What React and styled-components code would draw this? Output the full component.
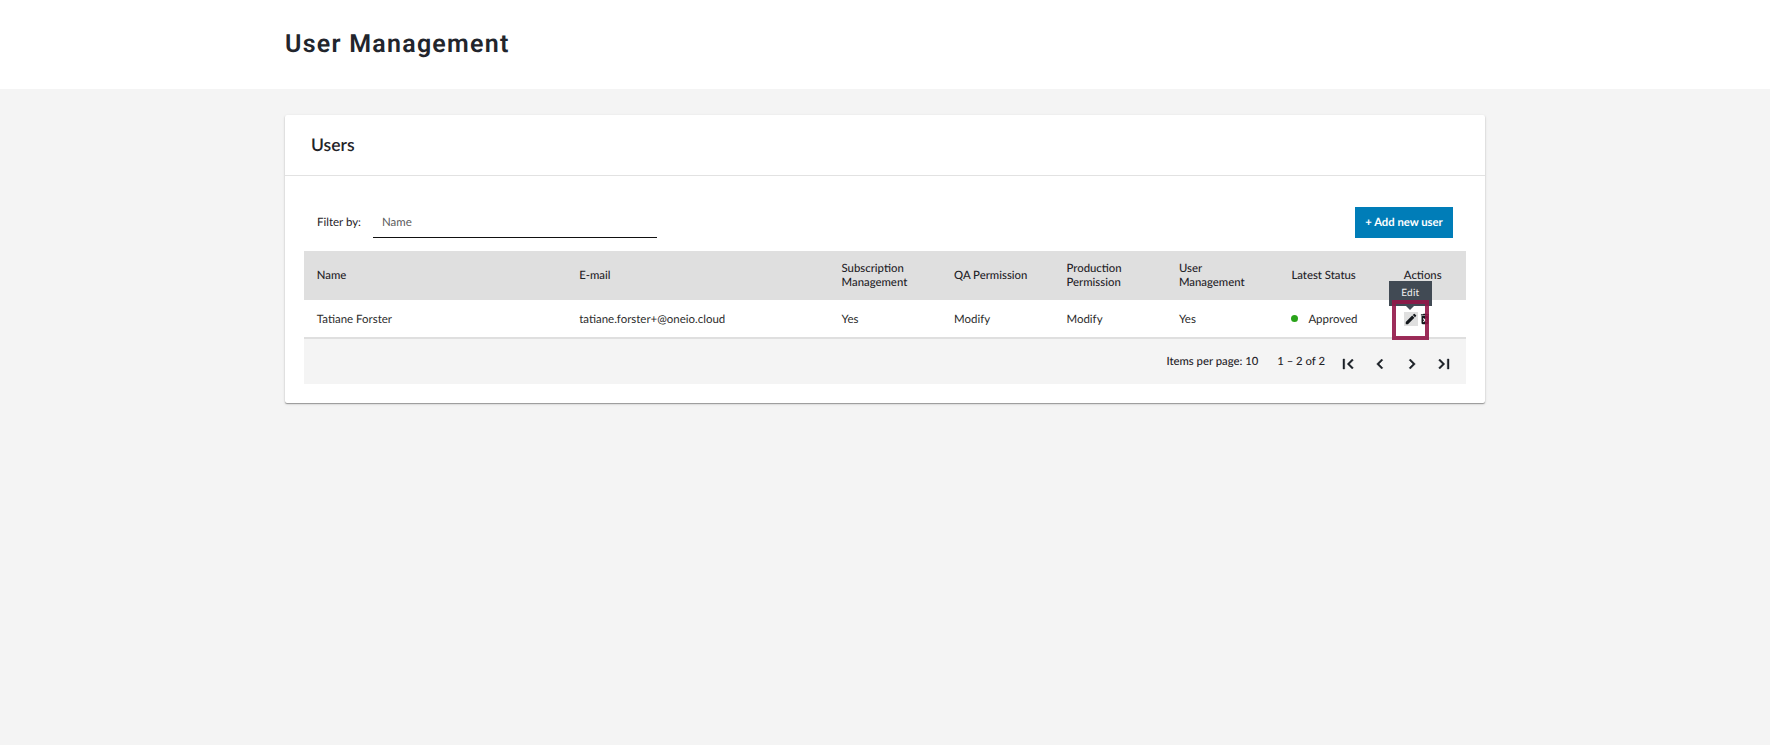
import React from 'react';
import styled, { createGlobalStyle } from 'styled-components';
import {
  MdEdit,
  MdDeleteForever,
  MdFirstPage,
  MdChevronLeft,
  MdChevronRight,
  MdLastPage,
} from 'react-icons/md';

const GlobalStyle = createGlobalStyle`
  * { box-sizing: border-box; }
  body {
    margin: 0;
    background: #f4f4f4;
    color: #1f2328;
    font-family: Lato, "Liberation Sans", sans-serif;
    font-size: 11.47px;
    line-height: 14px;
    text-rendering: geometricPrecision;
  }
  button, input {
    font: inherit;
    color: inherit;
    text-rendering: inherit;
    border: 0;
    padding: 0;
    border-radius: 0;
    background: none;
  }
`;

const Page = styled.div`
  min-height: 745px;
`;

const PageHeader = styled.header`
  height: 89px;
  background: #fff;
`;

const Container = styled.div`
  width: 1200px;
  margin: 0 auto;
`;

const Title = styled.h1`
  margin: 0;
  padding-top: 29px;
  font-family: Roboto, "Liberation Sans", sans-serif;
  font-size: 25px;
  line-height: 32px;
  font-weight: 600;
  letter-spacing: 1.25px;
  color: #22252c;
`;

const Card = styled.section`
  width: 1200px;
  height: 288px;
  margin: 26px auto 0;
  background: #fff;
  border-radius: 2px;
  box-shadow: 0 1px 1px rgba(0, 0, 0, 0.32), 0 1px 3px rgba(0, 0, 0, 0.14);
`;

const CardHeader = styled.div`
  height: 61px;
  padding: 19px 26px 0;
  border-bottom: 1px solid #e2e2e2;
`;

const CardTitle = styled.h2`
  margin: 0;
  font-size: 17.5px;
  line-height: 22px;
  font-weight: 600;
`;

const CardBody = styled.div`
  padding: 31px 19px 0;
`;

const Toolbar = styled.div`
  display: flex;
  height: 44px;
  padding: 0 13px;
`;

const FilterLabel = styled.label`
  width: 56px;
  padding-top: 9px;
`;

const FilterInput = styled.input`
  width: 284px;
  height: 31px;
  padding: 1px 9px 0;
  border-bottom: 1px solid #111;
  outline: none;
  &::placeholder { color: #5c5c5c; opacity: 1; }
`;

const AddButton = styled.button`
  width: 98px;
  height: 31px;
  margin-left: auto;
  padding-top: 1px;
  background: #007db8;
  color: #fff;
  font-size: 11.25px;
  font-weight: 700;
  white-space: nowrap;
`;

const Row = styled.div`
  display: grid;
  grid-template-columns: 7fr 7fr 3fr 3fr 3fr 3fr 3fr 2fr;
  align-items: center;
`;

const HeadRow = styled(Row)`
  height: 49px;
  padding-top: 1px;
  background: #dfdfdf;
  font-size: 11.35px;
  font-weight: 500;
`;

const BodyRow = styled(Row)`
  height: 39px;
  padding-top: 2px;
  border-bottom: 2px solid #dfdfdf;
  color: #2c2c2c;
`;

const Cell = styled.div`
  min-width: 0;
  padding-left: 12.8px;
`;

const Status = styled.div`
  display: flex;
  align-items: center;
  gap: 10px;
`;

const Dot = styled.span`
  width: 7px;
  height: 7px;
  margin-top: -2px;
  border-radius: 50%;
  background: #29a31a;
`;

const Actions = styled.div`
  position: relative;
  display: flex;
  height: 14px;
  margin-bottom: 1px;
`;

const IconButton = styled.button`
  display: flex;
  width: ${(p) => (p.$clip ? '11px' : '14px')};
  height: 14px;
  overflow: hidden;
  background: ${(p) => (p.$active ? '#dfdfdf' : 'transparent')};
  color: #14181d;
  svg { flex: none; }
`;

const Tooltip = styled.div`
  position: absolute;
  left: -15px;
  top: -31px;
  width: 43px;
  height: 25px;
  background: #414a54;
  color: #f1f1f1;
  font-size: 10px;
  line-height: 24px;
  letter-spacing: 0.3px;
  text-align: center;
  &::after {
    content: '';
    position: absolute;
    left: 17px;
    top: 25px;
    border: 4px solid transparent;
    border-top-color: #414a54;
    border-bottom: 0;
  }
`;

const Highlight = styled.div`
  position: absolute;
  left: -12px;
  top: -12px;
  width: 37px;
  height: 40px;
  border: 4px solid rgba(146, 22, 72, 0.9);
`;

const Paginator = styled.div`
  display: flex;
  justify-content: flex-end;
  height: 45px;
  padding-right: 6px;
  background: #f4f4f4;
  font-size: 11.3px;
  font-weight: 500;
`;

const PageText = styled.span`
  margin-top: 16px;
  margin-right: ${(p) => p.$gap}px;
`;

const PageButton = styled.button`
  display: flex;
  align-items: center;
  justify-content: center;
  width: 32px;
  height: 32px;
  margin-top: 9px;
  color: #1b2026;
  svg { stroke-width: 0.5px; }
  path[fill='none'] { stroke: none; }
`;

const columns = [
  ['Name'],
  ['E-mail'],
  ['Subscription', 'Management'],
  ['QA Permission'],
  ['Production', 'Permission'],
  ['User', 'Management'],
  ['Latest Status'],
  ['Actions'],
];

const user = ['Tatiane Forster', 'tatiane.forster+@oneio.cloud', 'Yes', 'Modify', 'Modify', 'Yes'];

const pageIcons = [
  ['First page', MdFirstPage],
  ['Previous page', MdChevronLeft],
  ['Next page', MdChevronRight],
  ['Last page', MdLastPage],
];

export default function App() {
  return (
    <Page>
      <GlobalStyle />
      <PageHeader>
        <Container>
          <Title>User Management</Title>
        </Container>
      </PageHeader>
      <Card>
        <CardHeader>
          <CardTitle>Users</CardTitle>
        </CardHeader>
        <CardBody>
          <Toolbar>
            <FilterLabel htmlFor="filter">Filter by:</FilterLabel>
            <FilterInput id="filter" placeholder="Name" />
            <AddButton>+ Add new user</AddButton>
          </Toolbar>
          <HeadRow>
            {columns.map((lines) => (
              <Cell key={lines.join(' ')}>
                {lines.map((line) => (
                  <div key={line}>{line}</div>
                ))}
              </Cell>
            ))}
          </HeadRow>
          <BodyRow>
            {user.map((value, i) => (
              <Cell key={i}>{value}</Cell>
            ))}
            <Cell>
              <Status>
                <Dot />
                Approved
              </Status>
            </Cell>
            <Cell>
              <Actions>
                <IconButton $active aria-label="Edit">
                  <MdEdit size={14} />
                </IconButton>
                <IconButton $clip aria-label="Delete">
                  <MdDeleteForever size={14} />
                </IconButton>
                <Tooltip>Edit</Tooltip>
                <Highlight />
              </Actions>
            </Cell>
          </BodyRow>
          <Paginator>
            <PageText $gap={19}>Items per page: 10</PageText>
            <PageText $gap={7}>1 – 2 of 2</PageText>
            {pageIcons.map(([label, Icon]) => (
              <PageButton key={label} aria-label={label}>
                <Icon size={20} />
              </PageButton>
            ))}
          </Paginator>
        </CardBody>
      </Card>
    </Page>
  );
}
